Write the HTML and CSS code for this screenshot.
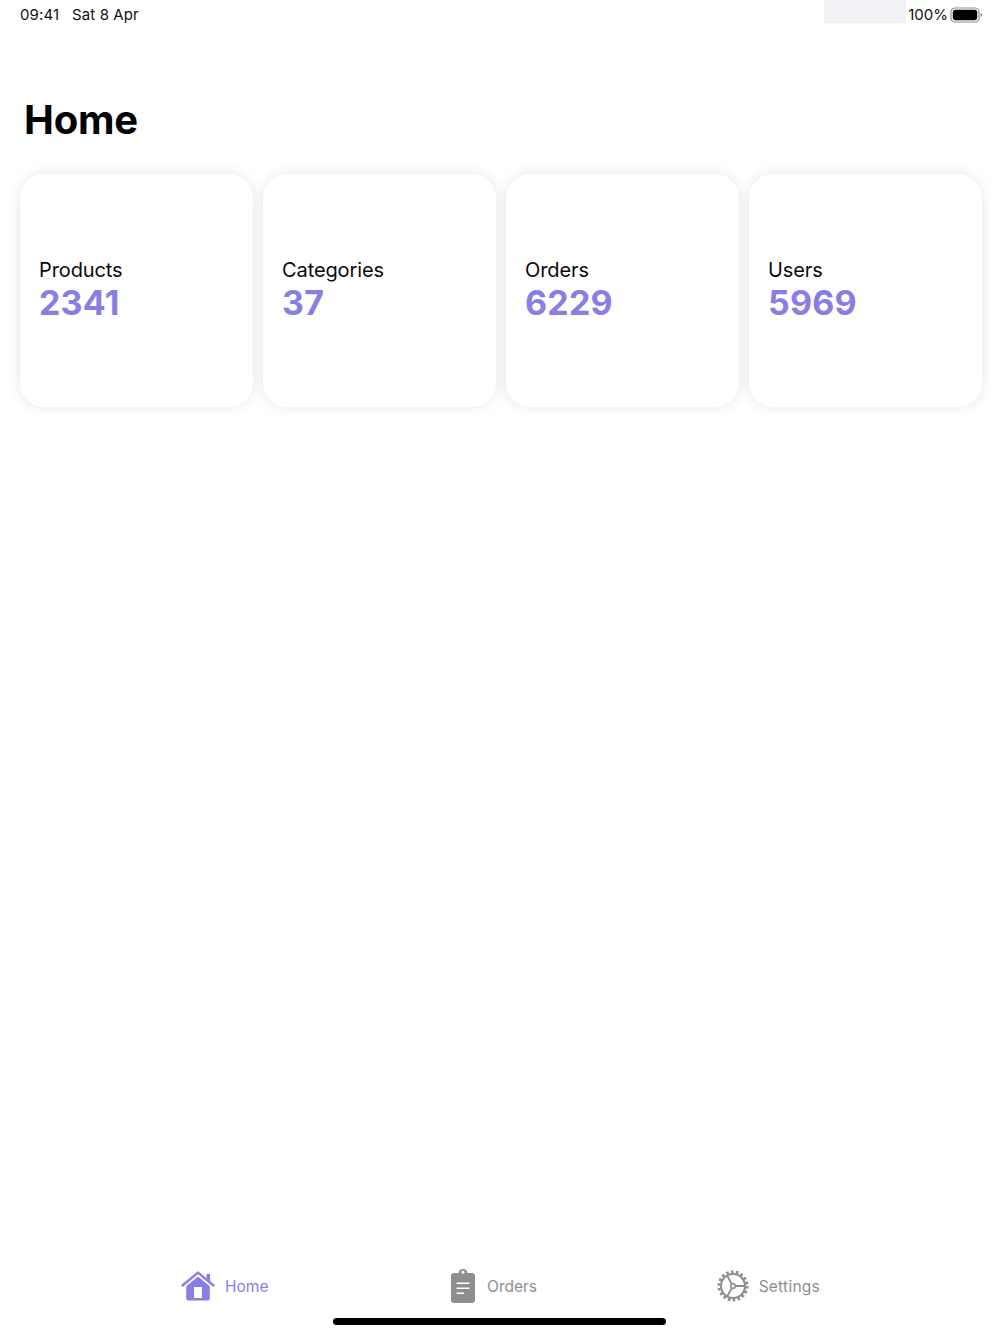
FILE: index.html
```html
<!DOCTYPE html>
<html lang="en">
<head>
<meta charset="utf-8">
<title>Home</title>
<link rel="stylesheet" href="styles.css">
</head>
<body>
<div class="app">
  <header class="status">
    <div class="status-left"><span>09:41</span><span>Sat 8 Apr</span></div>
    <div class="status-right">
      <div class="status-patch"></div>
      <span class="pct">100%</span>
      <svg class="battery" width="33" height="16" viewBox="0 0 33 16">
        <rect x="1" y="1" width="28" height="14" rx="4" fill="none" stroke="#8e8e8e" stroke-width="1.2"/>
        <rect x="2.800" y="2.800" width="24.400" height="10.400" rx="2.400" fill="#000"/>
        <path d="M30.500 6c1 .3 1.600 1.100 1.600 2s-.6 1.700-1.600 2z" fill="#8e8e8e"/>
      </svg>
    </div>
  </header>
  <main class="main">
    <h1 class="title">Home</h1>
    <section class="cards">
      <article class="card"><div class="label">Products</div><div class="value">2341</div></article>
      <article class="card"><div class="label">Categories</div><div class="value">37</div></article>
      <article class="card"><div class="label">Orders</div><div class="value">6229</div></article>
      <article class="card"><div class="label">Users</div><div class="value">5969</div></article>
    </section>
  </main>
  <nav class="tabs">
    <div class="tab tab-active">
      <svg width="34" height="30" viewBox="0 0 34 30">
        <path d="M25.500 3h3.600v7.500l-3.600-3z" fill="currentColor"/>
        <path d="M1.500 14.500 17 1.600l15.500 12.900" fill="none" stroke="currentColor" stroke-width="2.400" stroke-linecap="round" stroke-linejoin="round"/>
        <path fill-rule="evenodd" d="M17 5.500 28.800 15.300v12.200a2 2 0 0 1-2 2H7.200a2 2 0 0 1-2-2V15.300zM13 16v11h8V16z" fill="currentColor"/>
      </svg>
      <span>Home</span>
    </div>
    <div class="tab tab-orders">
      <svg width="26" height="34" viewBox="0 0 26 34">
        <path fill-rule="evenodd" d="M3 4h4.500Q8 0 12 0t4.500 4H21a3 3 0 0 1 3 3v24a3 3 0 0 1-3 3H3a3 3 0 0 1-3-3V7a3 3 0 0 1 3-3zM12 1.800a1.500 1.500 0 1 0 0 3 1.500 1.500 0 0 0 0-3zM5.500 13.600v1.500h13v-1.500zM5.500 18.400v1.500h13v-1.500zM5.500 23.400v1.500h7.500v-1.500z" fill="currentColor"/>
      </svg>
      <span>Orders</span>
    </div>
    <div class="tab tab-wide">
      <svg width="32" height="32" viewBox="0 0 32 32">
        <circle cx="16" cy="16" r="12" fill="none" stroke="currentColor" stroke-width="2"/>
        <circle cx="16" cy="16" r="14" fill="none" stroke="currentColor" stroke-width="3" stroke-dasharray="2.600 2.287"/>
        <circle cx="16" cy="16" r="2.300" fill="none" stroke="currentColor" stroke-width="1.600"/>
        <path d="M18.300 16H28M14.900 14 10 5.500M14.900 18 10 26.500" fill="none" stroke="currentColor" stroke-width="1.800"/>
      </svg>
      <span>Settings</span>
    </div>
  </nav>
  <div class="home-indicator"></div>
</div>
</body>
</html>
```

FILE: styles.css
```css
* { box-sizing: border-box; }
html, body { margin: 0; padding: 0; }
body { background: #fff; font-family: Inter, "Liberation Sans", sans-serif; color: #000; }
.app { width: 1000px; height: 1334px; display: flex; flex-direction: column; position: relative; overflow: hidden; }

.status { height: 62px; display: flex; justify-content: space-between; align-items: flex-start; padding: 0 17px 0 20px; flex: none; }
.status-left { display: flex; gap: 13px; font-size: 15px; line-height: 30px; color: #111; letter-spacing: 0.1px; }
.status-right { display: flex; align-items: flex-start; }
.status-patch { width: 82px; height: 23px; background: #f2f1f6; margin-right: 2px; }
.pct { font-size: 15px; line-height: 30px; color: #111; margin-right: 2px; }
.battery { margin-top: 7px; }

.main { flex: 1; padding: 0 19px 0 20px; }
.title { margin: 0 0 0 4px; font-size: 40px; line-height: 52px; font-weight: 700; letter-spacing: -0.2px; height: 112px; padding-top: 32px; }
.cards { display: grid; grid-template-columns: repeat(4, 233px); gap: 10px; }
.card { height: 233px; background: #fff; border-radius: 24px; padding: 0 19px 2px; display: flex; flex-direction: column; justify-content: center; box-shadow: 0 0 14px rgba(0, 0, 0, 0.1); }
.label { font-size: 20px; line-height: 26px; color: #0a0a0a; letter-spacing: -0.1px; }
.value { font-size: 34px; line-height: 40px; font-weight: 700; color: #8a7de3; letter-spacing: 0.2px; }

.tabs { flex: none; height: 98px; display: flex; justify-content: space-between; align-items: center; padding: 2px 180px 0 181px; color: #8e8e8e; }
.tab { display: flex; align-items: center; gap: 10px; font-size: 15.500px; }
.tab-orders { margin-left: 3px; }
.tab-wide { letter-spacing: 0.25px; }
.tab-active { color: #8a7de3; }
.home-indicator { position: absolute; left: 333px; bottom: 9px; width: 333px; height: 7px; border-radius: 4px; background: #000; }
```
